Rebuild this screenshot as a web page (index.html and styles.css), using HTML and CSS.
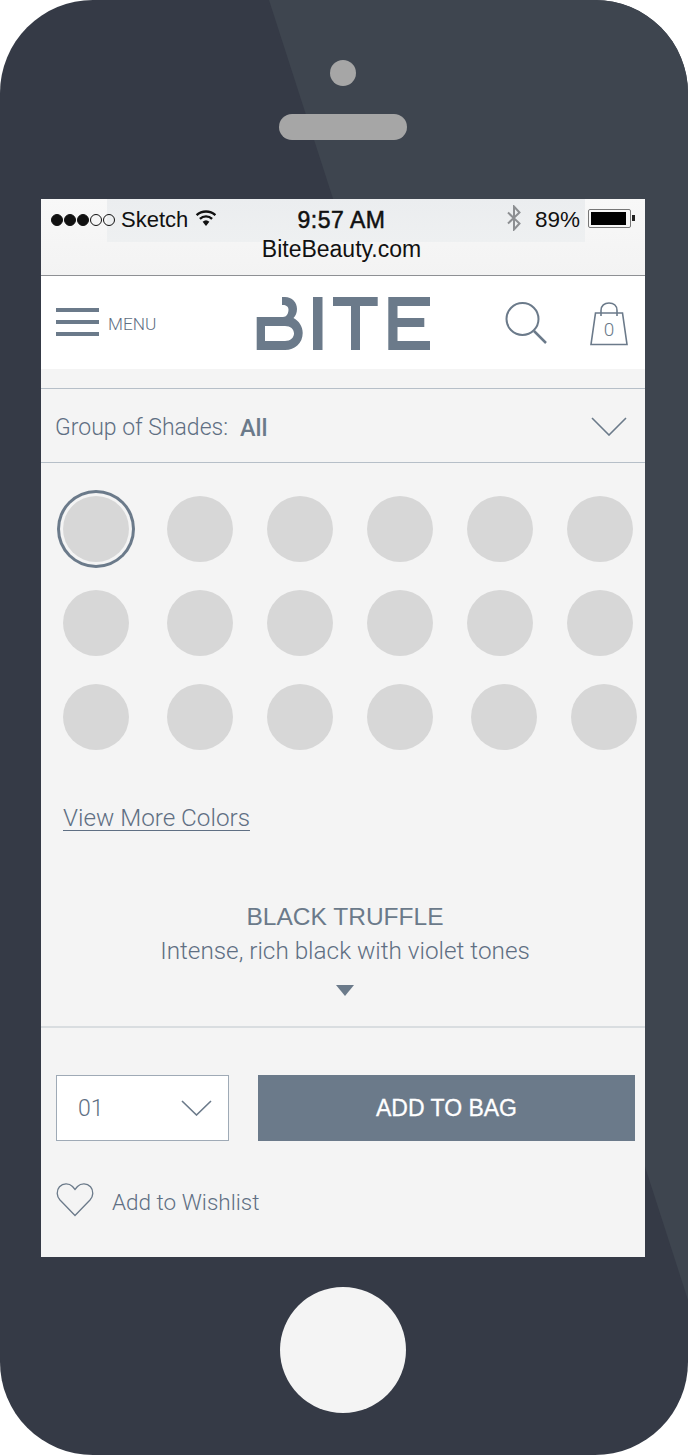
FILE: index.html
```html
<!DOCTYPE html>
<html lang="en">
<head>
<meta charset="utf-8">
<title>Bite Beauty</title>
<link rel="stylesheet" href="styles.css">
</head>
<body>
<div class="phone">
  <div class="glare"></div>
  <div class="camera"></div>
  <div class="speaker"></div>
  <main class="screen">
    <div class="status">
      <div class="status-row">
        <div class="status-left">
          <span class="dots"><i class="dot on"></i><i class="dot on"></i><i class="dot on"></i><i class="dot"></i><i class="dot"></i></span>
          <span class="carrier">Sketch</span>
          <svg class="wifi" viewBox="0 0 22 16" width="22" height="16"><path d="M11 16 7.6 11.8a5 5 0 0 1 6.8 0Z" fill="#111"/><path d="M4.9 8.8a9 9 0 0 1 12.2 0M1.6 5.2a14 14 0 0 1 18.8 0" fill="none" stroke="#111" stroke-width="2.4"/></svg>
        </div>
        <span class="time">9:57 AM</span>
        <div class="status-right">
          <svg class="bt" viewBox="0 0 14 26" width="14" height="26"><path d="M1 7.5 12.5 18.5 7 24.5V1.5L12.5 7.5 1 18.5" fill="none" stroke="#8d8f92" stroke-width="2"/></svg>
          <span class="pct">89%</span>
          <span class="battery"><span class="battery-fill"></span></span>
          <span class="battery-tip"></span>
        </div>
      </div>
      <div class="url">BiteBeauty.com</div>
    </div>
    <header class="header">
      <div class="menu">
        <span class="burger"><i></i><i></i><i></i></span>
        <span class="menu-label">MENU</span>
      </div>
      <svg class="logo" viewBox="256 296 175 55" width="175" height="55" role="img" aria-label="BITE">
        <path fill="#6b7a8a" fill-rule="evenodd" d="M282 297H285C292 297 297 302 297 309C297 313 295.500 316 293.500 318C299 321 302.700 326.500 302.700 333C302.700 343 295 350 285 350H256.700V317H283C286.500 317 288.500 313.500 288.500 309.500C288.500 306.500 286 305 283 305H282ZM265 326V341H285C290.500 341 294 337.500 294 333.500C294 329 290.500 326 285 326Z"/>
        <path fill="#6b7a8a" d="M313 297h9.500v53H313ZM333 297h44.700v9H360v44h-9V306H333ZM388.300 297H430v9H397.500v12H424.300v9H397.500v14H430v9H388.300Z"/>
      </svg>
      <svg class="search" viewBox="0 0 42 44" width="42" height="44"><circle cx="17.500" cy="18" r="16" fill="none" stroke="#6b7a8a" stroke-width="2"/><path d="M29 30 41 42" stroke="#6b7a8a" stroke-width="2.500" fill="none"/></svg>
      <div class="bag">
        <svg viewBox="0 0 38 44" width="38" height="44"><path d="M5.500 11H32.500L37 42.500H1Z M11 14V8.500C11 3.500 14.500 1 19 1S27 3.500 27 8.500V14" fill="none" stroke="#6b7a8a" stroke-width="1.600"/></svg>
        <span class="bag-count">0</span>
      </div>
    </header>
    <section class="filter">
      <span class="filter-label">Group of Shades:</span>
      <strong class="filter-value">All</strong>
      <svg class="chev-large" viewBox="0 0 36 19" width="36" height="19"><path d="M1 1 18 18 35 1" fill="none" stroke="#6b7a8a" stroke-width="1.600"/></svg>
    </section>
    <section class="swatches">
      <div class="swatch-row">
        <span class="swatch selected"></span><span class="swatch wide"></span><span class="swatch"></span><span class="swatch"></span><span class="swatch"></span><span class="swatch"></span>
      </div>
      <div class="swatch-row">
        <span class="swatch"></span><span class="swatch wide"></span><span class="swatch"></span><span class="swatch"></span><span class="swatch"></span><span class="swatch"></span>
      </div>
      <div class="swatch-row">
        <span class="swatch"></span><span class="swatch wide"></span><span class="swatch"></span><span class="swatch"></span><span class="swatch wide"></span><span class="swatch"></span>
      </div>
    </section>
    <a class="more" href="#">View More Colors</a>
    <section class="shade">
      <h2 class="shade-name">BLACK TRUFFLE</h2>
      <p class="shade-desc">Intense, rich black with violet tones</p>
      <span class="shade-arrow"></span>
    </section>
    <section class="buy">
      <div class="qty">
        <span>01</span>
        <svg viewBox="0 0 31 16" width="31" height="16"><path d="M1 1 15.500 15 30 1" fill="none" stroke="#6b7a8a" stroke-width="1.600"/></svg>
      </div>
      <button class="add" type="button">ADD TO BAG</button>
    </section>
    <div class="wish">
      <svg viewBox="0 0 38 35" width="38" height="35"><path d="M19 33.500 4 18C.5 14.200.2 8.500 3.500 4.800 7 1 13 1 16.500 4.500L19 7.500 21.500 4.500C25 1 31 1 34.500 4.800 37.800 8.500 37.500 14.200 34 18Z" fill="none" stroke="#6b7a8a" stroke-width="1.300"/></svg>
      <span class="wish-label">Add to Wishlist</span>
    </div>
  </main>
  <div class="home"></div>
</div>
</body>
</html>
```
FILE: styles.css
```css
* { box-sizing: border-box; }
html, body { margin: 0; padding: 0; background: #fff; }
body { font-family: "Liberation Sans", Arial, sans-serif; }

.phone {
  position: relative;
  width: 688px;
  height: 1455px;
  padding-top: 60px;
  background: #353a46;
  border-radius: 93px;
  overflow: hidden;
  display: flex;
  flex-direction: column;
  align-items: center;
}
.glare {
  position: absolute;
  inset: 0;
  background: #3e454f;
  clip-path: polygon(269px 0, 688px 0, 688px 1300px);
}
.camera {
  position: relative;
  width: 26px;
  height: 26px;
  margin-left: -2px;
  border-radius: 50%;
  background: #a6a6a6;
  flex: none;
}
.speaker {
  position: relative;
  width: 128px;
  height: 26px;
  margin-top: 28px;
  margin-left: -2px;
  border-radius: 13px;
  background: #a6a6a6;
  flex: none;
}
.screen {
  position: relative;
  width: 604px;
  height: 1058px;
  margin-top: 59px;
  margin-left: -2px;
  background: #f4f4f4;
  flex: none;
  color: #6b7a8a;
  display: flex;
  flex-direction: column;
}
.home {
  position: relative;
  width: 126px;
  height: 126px;
  margin-top: 30px;
  margin-left: -2px;
  border-radius: 50%;
  background: #f4f4f4;
  flex: none;
}

/* status bar */
.status {
  height: 77px;
  flex: none;
  border-bottom: 1px solid #8e9094;
  color: #111;
  background:
    linear-gradient(#ebedef, #eef0f1) 66px 0 / 478px 43px no-repeat,
    linear-gradient(#f8f8f8, #f3f3f3);
}
.status-row {
  height: 42px;
  padding: 0 10px;
  display: grid;
  grid-template-columns: 1fr auto 1fr;
  align-items: center;
  font-size: 22px;
}
.status-left { display: flex; align-items: center; }
.dots { display: flex; gap: 1px; margin-right: 6px; }
.dot {
  width: 12px;
  height: 12px;
  border: 1px solid #111;
  border-radius: 50%;
}
.dot.on { background: #111; }
.wifi { margin-left: 7px; margin-top: -4px; }
.time {
  font-size: 23px;
  letter-spacing: .5px;
  margin-left: -3px;
  -webkit-text-stroke: .5px #111;
}
.status-right { display: flex; align-items: center; justify-content: flex-end; }
.bt { margin-top: -4px; margin-right: 1px; }
.pct { margin-left: 13px; font-size: 22.500px; }
.battery {
  margin-left: 8px;
  margin-top: -4px;
  width: 43px;
  height: 19px;
  padding: 2px;
  border: 1px solid #777;
  border-radius: 2px;
  display: block;
}
.battery-fill { display: block; width: 35px; height: 100%; background: #000; }
.battery-tip { width: 3px; height: 6px; margin-top: -4px; margin-left: 1px; margin-right: 0; background: #222; }
.url { text-align: center; font-size: 23px; line-height: 26px; margin-left: -3px; margin-top: -5px; }

/* header */
.header {
  height: 93px;
  flex: none;
  background: #fff;
  position: relative;
  display: flex;
  align-items: center;
  padding-left: 15px;
}
.menu { display: flex; align-items: center; width: 200px; }
.burger { width: 43px; display: flex; flex-direction: column; gap: 8.500px; margin-top: -1px; }
.burger i { display: block; height: 3.500px; background: #6b7a8a; }
.menu-label { margin-left: 9px; margin-top: 2px; font-family: Roboto, sans-serif; font-weight: 300; font-size: 17.300px; color: #5f6f83; }
.logo { display: block; margin-left: 0; margin-top: 2px; }
.search { margin-left: 74px; margin-top: 0; }
.bag { position: relative; margin-left: 43px; margin-top: 3px; width: 38px; height: 44px; }
.bag svg { display: block; }
.bag-count { position: absolute; left: 0; right: 0; top: 16px; text-align: center; font-size: 19px; line-height: 24px; font-family: Roboto, sans-serif; font-weight: 300; }

/* filter */
.filter {
  margin-top: 19px;
  height: 75px;
  flex: none;
  border-top: 1px solid #b6bfc8;
  border-bottom: 1px solid #b6bfc8;
  display: flex;
  align-items: center;
  padding: 0 18px 0 14px;
  font-size: 22px;
}
.filter-label { margin-top: 4px; font-family: Roboto, sans-serif; font-weight: 300; font-size: 23px; color: #5f6f83; }
.filter-value { margin-top: 4px; margin-left: 12px; font-family: Roboto, sans-serif; font-weight: 500; font-size: 23.500px; }
.chev-large { margin-left: auto; margin-top: 2px; }

/* swatches */
.swatches { padding: 33px 0 0 22px; display: flex; flex-direction: column; gap: 28px; flex: none; }
.swatch-row { display: flex; gap: 34px; }
.swatch {
  width: 66px;
  height: 66px;
  border-radius: 50%;
  background: #d7d7d7;
  flex: none;
}
.swatch.wide { margin-left: 4px; }
.swatch.selected { box-shadow: 0 0 0 3px #f4f4f4, 0 0 0 6px #6b7a8a; }

.more {
  align-self: flex-start;
  margin: 53px 0 0 22px;
  font-family: Roboto, sans-serif;
  font-weight: 300;
  font-size: 24.250px;
  line-height: 30px;
  color: #5f6f83;
  text-decoration: underline;
  text-decoration-thickness: 1px;
  text-underline-offset: 4px;
}

/* shade */
.shade { margin-top: 69px; display: flex; flex-direction: column; align-items: center; padding-left: 4px; height: 126px; flex: none; border-bottom: 2px solid #d9dde0; }
.shade-name { margin: 0; font-family: "Liberation Sans", Arial, sans-serif; font-weight: 400; font-size: 24.500px; line-height: 30px; color: #6b7a8a; }
.shade-desc { margin: 4px 0 0; font-family: Roboto, sans-serif; font-weight: 300; font-size: 24.300px; line-height: 30px; color: #5f6f83; }
.shade-arrow { margin-top: 19px; width: 0; height: 0; border-left: 9.500px solid transparent; border-right: 9.500px solid transparent; border-top: 11px solid #6b7a8a; }

/* buy */
.buy { margin-top: 47px; padding: 0 10px 0 15px; display: flex; gap: 29px; height: 66px; flex: none; }
.qty {
  width: 173px;
  background: #fff;
  border: 1px solid #9faab6;
  display: flex;
  align-items: center;
  justify-content: space-between;
  padding: 0 16px 0 21px;
  font-family: Roboto, sans-serif;
  font-weight: 300;
  font-size: 23px;
  color: #5f6f83;
}
.add {
  flex: 1;
  border: 0;
  background: #6b7a8a;
  color: #fff;
  font-family: "Liberation Sans", Arial, sans-serif;
  font-size: 23px;
  -webkit-text-stroke: .3px #fff;
  padding: 0;
}

/* wishlist */
.wish { margin-top: 41px; padding-left: 15px; display: flex; align-items: center; gap: 18px; font-family: Roboto, sans-serif; font-weight: 300; font-size: 22.500px; color: #5f6f83; }
.wish svg { display: block; flex: none; }
.wish-label { margin-top: 4px; }
```
